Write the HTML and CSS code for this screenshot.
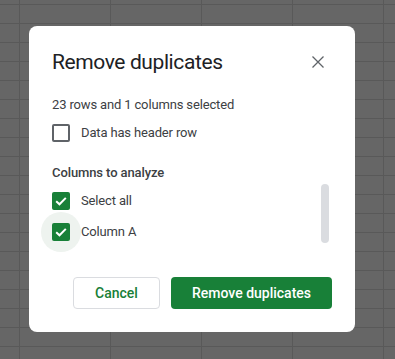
FILE: index.html
```html
<!DOCTYPE html>
<html>
<head>
<meta charset="utf-8">
<link rel="stylesheet" href="styles.css">
</head>
<body>
<div class="stage">
  <div class="dialog">
    <div class="header">
      <div class="title">Remove duplicates</div>
      <div class="close">
        <svg width="24" height="24" viewBox="0 0 24 24"><path d="M6.5 6.5L17.5 17.5M17.5 6.5L6.5 17.5" stroke="#5f6368" stroke-width="1.25" fill="none"/></svg>
      </div>
    </div>
    <div class="subtitle">23 rows and 1 columns selected</div>
    <div class="row first">
      <span class="target"><span class="box"></span></span>
      <span class="label">Data has header row</span>
    </div>
    <div class="heading">Columns to analyze</div>
    <div class="list">
      <div class="items">
        <div class="row">
          <span class="target"><span class="box checked"><svg width="18" height="18" viewBox="0 0 18 18"><path d="M4.2 9.2L7.5 12.3L13.8 5.9" stroke="#fff" stroke-width="2" fill="none"/></svg></span></span>
          <span class="label">Select all</span>
        </div>
        <div class="row">
          <span class="target focus"><span class="box checked"><svg width="18" height="18" viewBox="0 0 18 18"><path d="M4.2 9.2L7.5 12.3L13.8 5.9" stroke="#fff" stroke-width="2" fill="none"/></svg></span></span>
          <span class="label">Column A</span>
        </div>
      </div>
      <div class="scrollbar"></div>
    </div>
    <div class="footer">
      <button class="btn cancel">Cancel</button>
      <button class="btn primary">Remove duplicates</button>
    </div>
  </div>
</div>
</body>
</html>
```

FILE: styles.css
```css
html, body {
  margin: 0;
  padding: 0;
}
body {
  background-color: #666666;
  background-image:
    linear-gradient(to right, #595959 1px, transparent 1px),
    linear-gradient(to bottom, #595959 1px, transparent 1px);
  background-size: 91px 100%, 100% 19px;
  background-position: 19px 0, 0 4px;
  height: 359px;
  overflow: hidden;
  font-family: Roboto, "Liberation Sans", sans-serif;
}
.stage {
  padding: 26px 0 0 29px;
}
.dialog {
  box-sizing: border-box;
  width: 326px;
  height: 306px;
  background: #fff;
  border-radius: 8px;
  padding: 22px 23px 23px 23px;
}
.header {
  display: flex;
  justify-content: space-between;
  align-items: center;
  height: 28px;
}
.title {
  font-size: 21px;
  line-height: 28px;
  letter-spacing: -0.4px;
  color: #202124;
}
.close {
  width: 24px;
  height: 24px;
  margin-right: 2px;
}
.close svg {
  display: block;
}
.subtitle {
  margin-top: 19px;
  font-size: 13px;
  line-height: 20px;
  letter-spacing: -0.15px;
  color: #3c4043;
}
.row {
  display: flex;
  align-items: center;
  height: 24px;
  gap: 11px;
}
.row.first {
  margin-top: 6px;
}
.target {
  position: relative;
  z-index: 0;
  width: 18px;
  height: 18px;
  flex: none;
}
.target.focus::before {
  content: "";
  position: absolute;
  left: -11px;
  top: -11px;
  width: 40px;
  height: 40px;
  border-radius: 50%;
  background: #eef3ef;
  z-index: -1;
}
.box {
  display: block;
  box-sizing: border-box;
  width: 18px;
  height: 18px;
  border: 2px solid #5f6368;
  border-radius: 2px;
}
.box.checked {
  border: none;
  background: #188038;
}
.box svg {
  display: block;
}
.label {
  font-size: 13px;
  line-height: 20px;
  letter-spacing: -0.15px;
  color: #3c4043;
}
.heading {
  margin-top: 18px;
  font-size: 13px;
  line-height: 20px;
  font-weight: 500;
  letter-spacing: -0.1px;
  color: #3c4043;
}
.list {
  display: flex;
  justify-content: space-between;
}
.items {
  padding-top: 6px;
  display: flex;
  flex-direction: column;
  gap: 7px;
}
.scrollbar {
  width: 8px;
  height: 59px;
  margin-top: 1px;
  margin-right: 3px;
  background: #dadce0;
  border-radius: 4px;
}
.footer {
  margin-top: 33px;
  display: flex;
  justify-content: flex-end;
  gap: 11px;
}
.btn {
  box-sizing: border-box;
  height: 32px;
  border-radius: 4px;
  font-family: Roboto, "Liberation Sans", sans-serif;
  font-size: 14px;
  font-weight: 500;
  padding: 0;
  cursor: pointer;
}
.cancel {
  width: 87px;
  background: #fff;
  border: 1px solid #dadce0;
  color: #188038;
}
.primary {
  width: 161px;
  background: #188038;
  border: none;
  color: #fff;
}
```
